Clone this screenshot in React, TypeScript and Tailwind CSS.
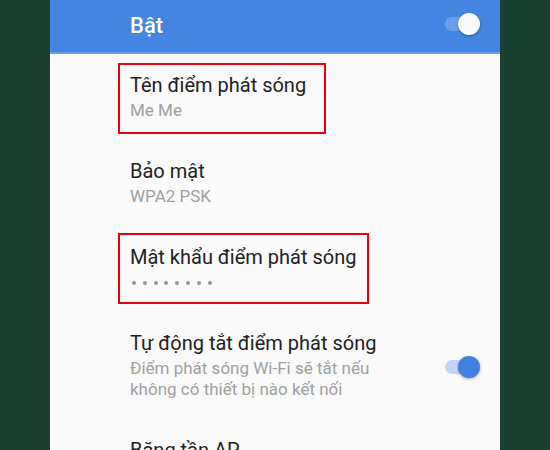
import React from 'react';

type Item = {
  title: string;
  sub?: React.ReactNode;
  dots?: boolean;
  toggle?: boolean;
  box?: string;
};

const items: Item[] = [
  { title: 'Tên điểm phát sóng', sub: 'Me Me', box: 'top-[9px] w-[208px]' },
  { title: 'Bảo mật', sub: 'WPA2 PSK' },
  { title: 'Mật khẩu điểm phát sóng', dots: true, box: 'top-[7px] w-[251px]' },
  {
    title: 'Tự động tắt điểm phát sóng',
    sub: (
      <>
        Điểm phát sóng Wi-Fi sẽ tắt nếu
        <br />
        không có thiết bị nào kết nối
      </>
    ),
    toggle: true,
  },
  { title: 'Băng tần AP', sub: '2,4 GHz' },
];

function Switch({ onHeader }: { onHeader?: boolean }) {
  return (
    <div className="relative w-[34px] h-[22px] flex items-center shrink-0">
      <div
        className={`w-[34px] h-[14px] rounded-full ${onHeader ? 'bg-[#6c9fe8]' : 'bg-[#c3d7f5]'}`}
      />
      <div
        className={`absolute right-[-1px] top-0 w-[22px] h-[22px] rounded-full shadow-[0_1px_3px_rgba(0,0,0,0.35)] ${
          onHeader ? 'bg-[#fafafa]' : 'bg-[#3f80e0]'
        }`}
      />
    </div>
  );
}

function Row({ item }: { item: Item }) {
  return (
    <div className="relative flex items-center pl-[80px] pr-[21px] pt-[19px] pb-[19px]">
      <div className="flex-1">
        <div className="text-[20px] leading-[24px] text-[#212121]">{item.title}</div>
        {item.dots ? (
          <div className="mt-[3px] h-[21px] flex items-center gap-[6.8px] pl-[2px]">
            {Array.from({ length: 8 }).map((_, i) => (
              <span key={i} className="w-[4px] h-[4px] rounded-full bg-[#969696]" />
            ))}
          </div>
        ) : (
          <div className="mt-[3px] text-[17px] leading-[21px] text-[#a0a0a0]">{item.sub}</div>
        )}
      </div>
      {item.toggle && (
        <div className="mt-[2px]">
          <Switch />
        </div>
      )}
      {item.box && (
        <div className={`absolute left-[68px] h-[71px] border-2 border-[#ea0010] ${item.box}`} />
      )}
    </div>
  );
}

export default function App() {
  return (
    <div className="w-[550px] h-[450px] bg-[#1a4131] flex justify-center overflow-hidden font-['Roboto',sans-serif]">
      <div className="w-[450px] h-[450px] bg-[#fafafa] overflow-hidden">
        <div className="h-[52px] bg-[#4385e0] flex items-center justify-between pl-[80px] pr-[21px]">
          <span className="text-[22px] leading-[26px] font-medium text-white">Bật</span>
          <div className="mb-[4px]">
            <Switch onHeader />
          </div>
        </div>
        <div className="h-[2px] bg-[#6aa0ea]" />
        {items.map((item) => (
          <Row key={item.title} item={item} />
        ))}
      </div>
    </div>
  );
}
